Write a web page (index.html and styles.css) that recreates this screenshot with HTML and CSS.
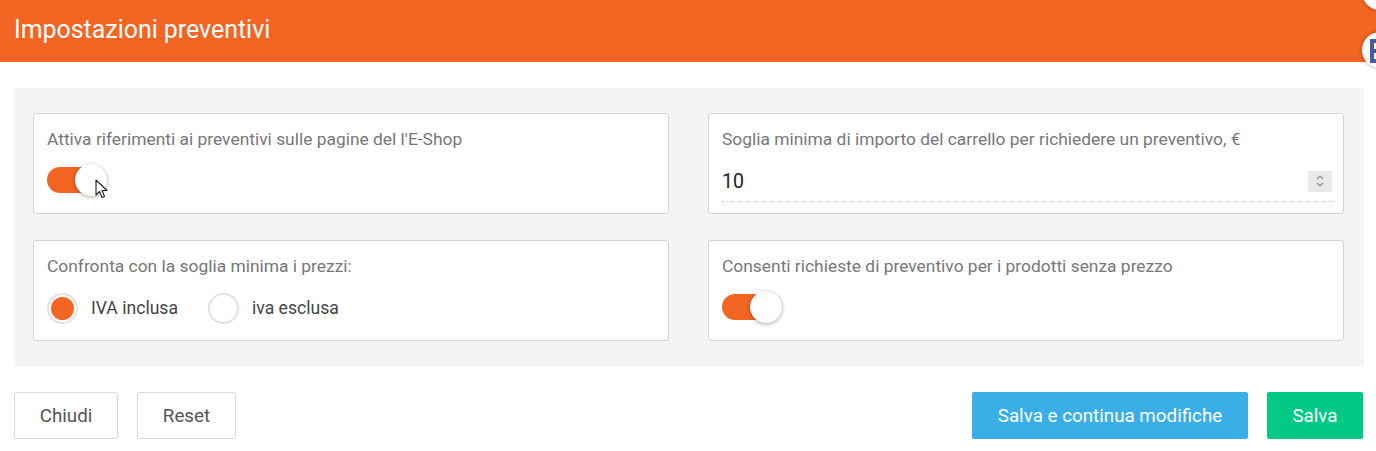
FILE: index.html
```html
<!DOCTYPE html>
<html lang="it">
<head>
  <meta charset="UTF-8">
  <title>Impostazioni preventivi</title>
  <link rel="stylesheet" href="styles.css">
</head>
<body>
  <div class="modal">
    <div class="modal-header">
      <h2>Impostazioni preventivi</h2>
    </div>

    <div class="modal-body">
      <div class="panel">
        <div class="card">
          <div class="card-label">Attiva riferimenti ai preventivi sulle pagine del l'E-Shop</div>
          <div class="card-control">
            <span class="toggle on"><span class="knob"></span></span>
            <svg class="cursor" width="13" height="20" viewBox="0 0 13 20">
              <path d="M1 1 L1 16 L4.5 12.5 L7 18.5 L9.5 17.5 L7 11.5 L12 11.5 Z" fill="#fff" stroke="#222" stroke-width="1.1" stroke-linejoin="round"/>
            </svg>
          </div>
        </div>

        <div class="card">
          <div class="card-label">Soglia minima di importo del carrello per richiedere un preventivo, €</div>
          <div class="number-field">
            <span class="number-value">10</span>
            <span class="spinner">
              <svg width="10" height="16" viewBox="0 0 10 16">
                <path d="M2 6 L5 3 L8 6" fill="none" stroke="#8a8a8a" stroke-width="1.2"/>
                <path d="M2 10 L5 13 L8 10" fill="none" stroke="#8a8a8a" stroke-width="1.2"/>
              </svg>
            </span>
          </div>
        </div>

        <div class="card">
          <div class="card-label">Confronta con la soglia minima i prezzi:</div>
          <div class="card-control radios">
            <label class="radio checked"><span class="dot"></span>IVA inclusa</label>
            <label class="radio"><span class="dot"></span>iva esclusa</label>
          </div>
        </div>

        <div class="card">
          <div class="card-label">Consenti richieste di preventivo per i prodotti senza prezzo</div>
          <div class="card-control">
            <span class="toggle on"><span class="knob"></span></span>
          </div>
        </div>
      </div>
    </div>

    <div class="modal-footer">
      <div class="btn-group">
        <button class="btn btn-default btn-close">Chiudi</button>
        <button class="btn btn-default btn-reset">Reset</button>
      </div>
      <div class="btn-group">
        <button class="btn btn-info">Salva e continua modifiche</button>
        <button class="btn btn-success">Salva</button>
      </div>
    </div>
  </div>

  <!-- floating widgets on the right edge -->
  <div class="float-btn float-top"></div>
  <div class="float-btn float-mid">
    <svg width="14" height="24" viewBox="0 0 14 24">
      <rect x="0" y="0" width="4" height="24" fill="#4a5aa8"/>
      <rect x="0" y="0" width="14" height="4" fill="#4a5aa8"/>
      <rect x="0" y="10" width="12" height="4" fill="#4a5aa8"/>
      <rect x="0" y="20" width="14" height="4" fill="#4a5aa8"/>
    </svg>
  </div>
</body>
</html>
```

FILE: styles.css
```css
* {
  margin: 0;
  padding: 0;
  box-sizing: border-box;
}

body {
  font-family: Roboto, 'Liberation Sans', sans-serif;
  background-color: #fff;
  color: #333;
  width: 1376px;
  height: 451px;
  overflow: hidden;
  position: relative;
}

/* Header */
.modal-header {
  height: 62px;
  background-color: #f36523;
  display: flex;
  align-items: center;
  padding: 0 14px;
}

.modal-header h2 {
  color: #fff;
  font-weight: 400;
  font-size: 24.9px;
  margin-top: -4px;
}

/* Body */
.modal-body {
  padding: 26px 12px 0 14px;
}

.panel {
  background-color: #f4f4f4;
  padding: 25px 20px 25px 19px;
  display: grid;
  grid-template-columns: 1fr 1fr;
  gap: 26px 39px;
}

.card {
  background-color: #fff;
  border: 1px solid #d4d4d4;
  border-radius: 3px;
  height: 101px;
  padding: 15px 13px 0 13px;
}

.card-label {
  font-size: 17.4px;
  line-height: 21px;
  color: #777;
}

.card-control {
  margin-top: 14px;
  height: 32px;
  display: flex;
  align-items: center;
  position: relative;
}

/* Toggle */
.toggle {
  position: relative;
  display: inline-block;
  width: 52px;
  height: 26px;
  border-radius: 13px;
  background-color: #f36523;
}

.toggle .knob {
  position: absolute;
  top: -3px;
  right: -8px;
  width: 32px;
  height: 32px;
  border-radius: 50%;
  background-color: #fff;
  box-shadow: 0 1px 4px rgba(0, 0, 0, 0.35);
}

.cursor {
  position: absolute;
  left: 48px;
  top: 15px;
}

/* Number field */
.number-field {
  margin-top: 13px;
  margin-right: -2px;
  height: 39px;
  display: flex;
  align-items: center;
  justify-content: space-between;
  border-bottom: 1px dotted #c8c8c8;
  padding-bottom: 2px;
}

.number-value {
  font-size: 19.5px;
  color: #222;
}

.spinner {
  width: 24px;
  height: 21px;
  background-color: #e9e9e9;
  display: flex;
  align-items: center;
  justify-content: center;
}

/* Radios */
.radios {
  margin-top: 15px;
  gap: 30px;
}

.radio {
  display: flex;
  align-items: center;
  font-size: 17.6px;
  color: #444;
}

.radio .dot {
  width: 31px;
  height: 31px;
  border-radius: 50%;
  border: 2px solid #e2e2e2;
  background-color: #fff;
  margin-right: 13px;
  position: relative;
}

.radio.checked .dot::after {
  content: "";
  position: absolute;
  left: 2px;
  top: 2px;
  width: 23px;
  height: 23px;
  border-radius: 50%;
  background-color: #f36523;
}

/* Footer */
.modal-footer {
  margin-top: 26px;
  padding: 0 13px 0 14px;
  display: flex;
  justify-content: space-between;
}

.btn-group {
  display: flex;
  gap: 19px;
}

.btn {
  height: 47px;
  font-family: Roboto, 'Liberation Sans', sans-serif;
  font-size: 18.8px;
  border-radius: 2px;
  cursor: pointer;
  border: 1px solid transparent;
}

.btn-default {
  background-color: #fff;
  border-color: #dadada;
  color: #555;
}

.btn-close {
  width: 104px;
}

.btn-reset {
  width: 99px;
}

.btn-info {
  width: 276px;
  background-color: #3aaee6;
  color: #fff;
}

.btn-success {
  width: 96px;
  background-color: #02c986;
  color: #fff;
}

/* Floating widgets */
.float-btn {
  position: absolute;
  left: 1362px;
  width: 36px;
  height: 36px;
  border-radius: 50%;
  background-color: #fff;
  box-shadow: 0 0 4px rgba(0, 0, 0, 0.3);
  overflow: hidden;
}

.float-top {
  top: -26px;
}

.float-mid {
  top: 32px;
}

.float-mid svg {
  position: absolute;
  left: 8px;
  top: 7px;
}
```
